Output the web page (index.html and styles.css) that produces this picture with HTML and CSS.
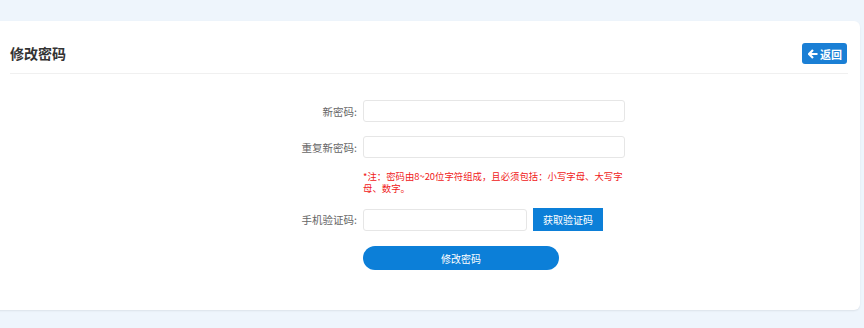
FILE: index.html
```html
<!DOCTYPE html>
<html lang="zh-CN">
<head>
    <meta charset="UTF-8">
    <title>修改密码</title>
    <link rel="stylesheet" href="styles.css">
</head>
<body>
<div class="card">
    <div class="card-header">
        <h1>修改密码</h1>
        <a class="back-btn" href="#">
            <svg width="10" height="10" viewBox="0 0 10 10"><path d="M5 1 L1 5 L5 9 M1.5 5 H9.5" stroke="#fff" stroke-width="2.2" fill="none" stroke-linejoin="round"/></svg>
            返回
        </a>
    </div>

    <!-- 修改密码表单 -->
    <form class="pwd-form">
        <div class="form-row">
            <label for="newPwd">新密码:</label>
            <input id="newPwd" type="password">
        </div>
        <div class="form-row">
            <label for="repeatPwd">重复新密码:</label>
            <input id="repeatPwd" type="password">
        </div>
        <p class="tip">*注：密码由8~20位字符组成，且必须包括：小写字母、大写字母、数字。</p>
        <div class="form-row code-row">
            <label for="smsCode">手机验证码:</label>
            <input id="smsCode" class="short" type="text">
            <button type="button" class="code-btn">获取验证码</button>
        </div>
        <div class="form-row">
            <span class="label-space"></span>
            <button type="button" class="submit-btn">修改密码</button>
        </div>
    </form>
</div>
</body>
</html>
```

FILE: styles.css
```css
html, body {
    margin: 0;
    height: 100%;
}
body {
    background: #eef5fc;
    font-family: "Microsoft YaHei", "Noto Sans CJK SC", sans-serif;
    padding: 21px 4px 0 0;
    box-sizing: border-box;
}
.card {
    background: #fff;
    margin-left: -6px;
    height: 289px;
    border-radius: 6px;
    box-shadow: 0 1px 2px rgba(0, 0, 0, 0.08);
    padding: 0 12px 0 16px;
    box-sizing: border-box;
}
.card-header {
    display: flex;
    align-items: center;
    justify-content: space-between;
    padding: 22px 0 9px;
    border-bottom: 1px solid #f0f0f0;
}
h1 {
    margin: 0;
    font-size: 14px;
    font-weight: bold;
    color: #333;
    line-height: 21px;
}
.back-btn {
    display: flex;
    align-items: center;
    gap: 2px;
    height: 21px;
    padding: 0 5px 0 6px;
    margin-right: 1px;
    background: #1a7fd5;
    color: #fff;
    border-radius: 3px;
    font-size: 11px;
    font-weight: bold;
    text-decoration: none;
}
.pwd-form {
    padding-top: 26px;
}
.form-row {
    display: flex;
    align-items: center;
    margin-bottom: 14px;
}
.code-row {
    margin-bottom: 15px;
}
label, .label-space {
    width: 353px;
    flex-shrink: 0;
    text-align: right;
    font-size: 10.5px;
    color: #666;
    padding-right: 6px;
    box-sizing: border-box;
}
input {
    width: 262px;
    height: 22px;
    border: 1px solid #e6e6e6;
    border-radius: 3px;
    box-sizing: border-box;
    padding: 0 6px;
}
input.short {
    width: 164px;
}
.code-btn {
    margin-left: 6px;
    width: 70px;
    height: 23px;
    border: none;
    background: #0c7fd8;
    color: #fff;
    font-family: inherit;
    font-size: 10px;
}
.tip {
    margin: -2px 0 14px 353px;
    width: 262px;
    font-size: 9.4px;
    line-height: 12px;
    color: #f02020;
}
.submit-btn {
    width: 196px;
    height: 24px;
    border: none;
    border-radius: 12px;
    background: #0c7fd8;
    color: #fff;
    font-family: inherit;
    font-size: 10px;
}
```
